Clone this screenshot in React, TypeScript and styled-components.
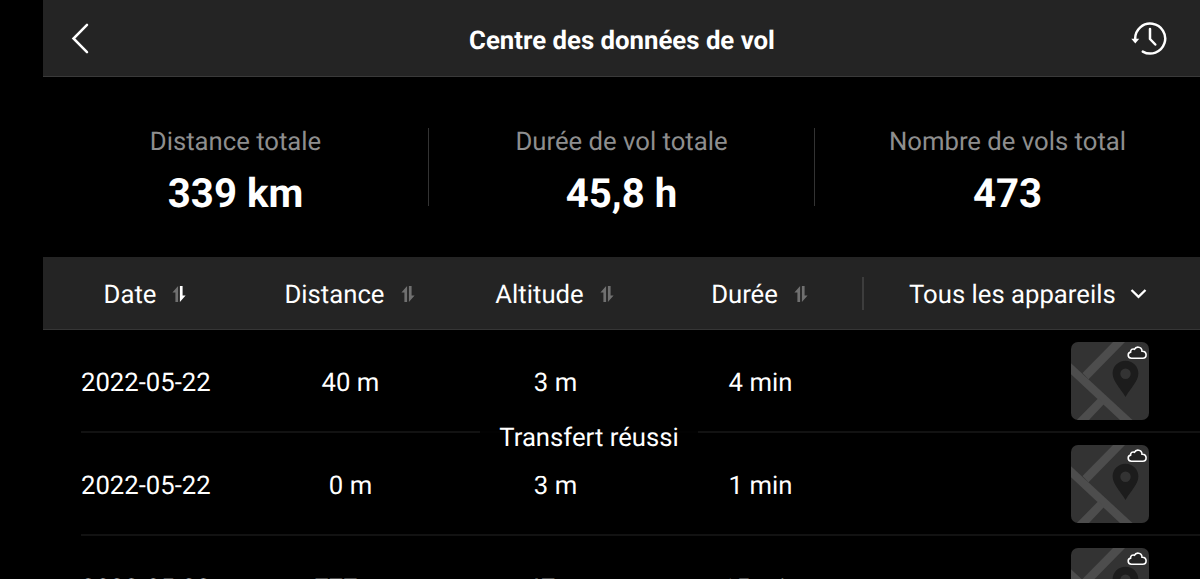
import styled, { createGlobalStyle } from 'styled-components';

const GlobalStyle = createGlobalStyle`
  * {
    box-sizing: border-box;
  }

  body {
    margin: 0;
    background: #000;
    overflow: hidden;
  }
`;

const Screen = styled.div`
  position: relative;
  height: 579px;
  padding-left: 43px;
  overflow: hidden;
  background: #000;
  color: #fff;
  font-family: Roboto, sans-serif;
  font-size: 25.7px;
  line-height: 30px;
  text-rendering: geometricPrecision;
`;

const Header = styled.header`
  display: grid;
  grid-template-columns: 40px 1fr 38px;
  align-items: center;
  height: 77px;
  padding: 0 31px 0 28px;
  background: #242424;
  border-bottom: 1px solid #3a3a3a;

  svg {
    display: block;
  }
`;

const Title = styled.h1`
  margin: 6px 0 0;
  padding-left: 2px;
  font-size: 25.75px;
  font-weight: 700;
  line-height: 30px;
  text-align: center;
`;

const Stats = styled.section`
  display: grid;
  grid-template-columns: 385px 386px 386px;
  height: 180px;
  padding-top: 51px;
`;

const Stat = styled.div`
  height: 78px;
  text-align: center;

  & + & {
    border-left: 1px solid #333;
  }
`;

const StatLabel = styled.div`
  margin-top: -1px;
  color: #8e8e8e;
`;

const StatValue = styled.div`
  margin-top: 14px;
  font-size: 40.2px;
  font-weight: 700;
  line-height: 46px;
`;

const TableHead = styled.div`
  display: grid;
  grid-template-columns: 204px 205px 205px 205px 1fr;
  align-items: center;
  height: 73px;
  padding-top: 1px;
  background: #242424;
  border-bottom: 1px solid #363636;
`;

const HeadCell = styled.div`
  display: flex;
  align-items: center;
  justify-content: center;
  gap: 16px;
`;

const HeadLabel = styled.span`
  padding-top: 2px;
`;

const DeviceFilter = styled.div`
  display: flex;
  align-items: center;
  height: 33px;
  padding-left: 45px;
  gap: 14px;
  border-left: 2px solid #3d3d3d;
`;

const Row = styled.div`
  display: grid;
  grid-template-columns: 167px repeat(3, 205px) 1fr;
  align-items: center;
  height: 103px;
  margin-left: 38px;
  padding-top: 1px;
  border-bottom: 2px solid #121212;
`;

const Cell = styled.div<{ $first?: boolean }>`
  padding-top: 3px;
  text-align: ${({ $first }) => ($first ? 'left' : 'center')};
`;

const Preview = styled.div`
  justify-self: end;
  width: 78px;
  height: 78px;
  margin-right: 51px;
  border-radius: 7px;
  overflow: hidden;

  svg {
    display: block;
  }
`;

const Toast = styled.div`
  position: absolute;
  top: 399px;
  left: 480px;
  width: 218px;
  height: 77px;
  padding-top: 24px;
  border-radius: 8px;
  background: rgba(0, 0, 0, 0.85);
  text-align: center;
`;

function BackIcon() {
  return (
    <svg width='20' height='32' viewBox='0 0 20 32' fill='none'>
      <path d='M16 2.8 L2.5 16.5 L16 30.2' stroke='#fff' strokeWidth='2.5' strokeLinecap='round' />
    </svg>
  );
}

function HistoryIcon() {
  return (
    <svg width='38' height='36' viewBox='0 0 38 36' fill='none'>
      <path
        d='M4.2 19 A15 15 0 1 1 11.8 31.6'
        stroke='#fff'
        strokeWidth='2.5'
        strokeLinecap='round'
      />
      <path d='M0.3 18.8 H8.2 L4.3 23.6 Z' fill='#fff' />
      <path
        d='M19 9 V19 L24.3 24.5'
        stroke='#fff'
        strokeWidth='2.5'
        strokeLinecap='round'
        strokeLinejoin='round'
      />
    </svg>
  );
}

function SortIcon({ active }: { active?: boolean }) {
  return (
    <svg width='14' height='18' viewBox='0 0 14 18'>
      <path d='M6.1 1 V17 H3.4 V7.5 H0.4 Z' fill='#707070' />
      <path d='M7.9 17 V1 H10.6 V10.5 H13.6 Z' fill={active ? '#fff' : '#707070'} />
    </svg>
  );
}

function ChevronIcon() {
  return (
    <svg width='17' height='12' viewBox='0 0 17 12' fill='none'>
      <path d='M1.5 2 L8.5 8.8 L15.5 2' stroke='#fff' strokeWidth='2.3' />
    </svg>
  );
}

function MapPreview() {
  return (
    <Preview>
      <svg width='78' height='78' viewBox='0 0 78 78'>
        <rect width='78' height='78' fill='#333' />
        <path d='M42 0 H54 L17.5 37.2 L11.5 31 Z' fill='#4d4d4d' />
        <path d='M0 21.3 L61.5 78 H49 L0 32.3 Z' fill='#4d4d4d' />
        <path d='M27.5 56 L33.3 61.8 L18 78 H5.8 Z' fill='#4d4d4d' />
        <path
          d='M54.5 18.7 C47.2 18.7 41.6 24.3 41.6 31.3 C41.6 39.5 49 45.5 54.5 55 C60 45.5 67.4 39.5 67.4 31.3 C67.4 24.3 61.8 18.7 54.5 18.7 Z'
          fill='#1c1c1c'
        />
        <circle cx='54.5' cy='31.7' r='5.2' fill='#333' />
        <path
          d='M60.5 16.2 C58.5 16.2 57.2 14.9 57.2 13.1 C57.2 11.5 58.2 10.4 59.6 10.1 C59.4 7.7 61.6 6.4 63.4 7.3 C64.4 5.4 66.1 5 67.5 5.2 C69.7 5.5 71 7.2 71 9.2 C73.6 9 75.1 10.7 75.1 12.7 C75.1 14.8 73.6 16.2 71.7 16.2 Z'
          fill='#222'
          stroke='#fff'
          strokeWidth='1.6'
        />
      </svg>
    </Preview>
  );
}

interface IFlight {
  date: string;
  distance: string;
  altitude: string;
  duration: string;
}

const stats = [
  { label: 'Distance totale', value: '339 km' },
  { label: 'Durée de vol totale', value: '45,8 h' },
  { label: 'Nombre de vols total', value: '473' },
];

const columns = ['Date', 'Distance', 'Altitude', 'Durée'];

const flights: IFlight[] = [
  { date: '2022-05-22', distance: '40 m', altitude: '3 m', duration: '4 min' },
  { date: '2022-05-22', distance: '0 m', altitude: '3 m', duration: '1 min' },
  { date: '2022-05-22', distance: '777 m', altitude: '47 m', duration: '15 min' },
];

function App() {
  return (
    <>
      <GlobalStyle />
      <Screen>
        <Header>
          <BackIcon />
          <Title>Centre des données de vol</Title>
          <HistoryIcon />
        </Header>
        <Stats>
          {stats.map((stat) => (
            <Stat key={stat.label}>
              <StatLabel>{stat.label}</StatLabel>
              <StatValue>{stat.value}</StatValue>
            </Stat>
          ))}
        </Stats>
        <TableHead>
          {columns.map((column, i) => (
            <HeadCell key={column}>
              <HeadLabel>{column}</HeadLabel>
              <SortIcon active={i === 0} />
            </HeadCell>
          ))}
          <DeviceFilter>
            <HeadLabel>Tous les appareils</HeadLabel>
            <ChevronIcon />
          </DeviceFilter>
        </TableHead>
        {flights.map((flight, i) => (
          <Row key={i}>
            <Cell $first>{flight.date}</Cell>
            <Cell>{flight.distance}</Cell>
            <Cell>{flight.altitude}</Cell>
            <Cell>{flight.duration}</Cell>
            <MapPreview />
          </Row>
        ))}
        <Toast>Transfert réussi</Toast>
      </Screen>
    </>
  );
}

export default App;
